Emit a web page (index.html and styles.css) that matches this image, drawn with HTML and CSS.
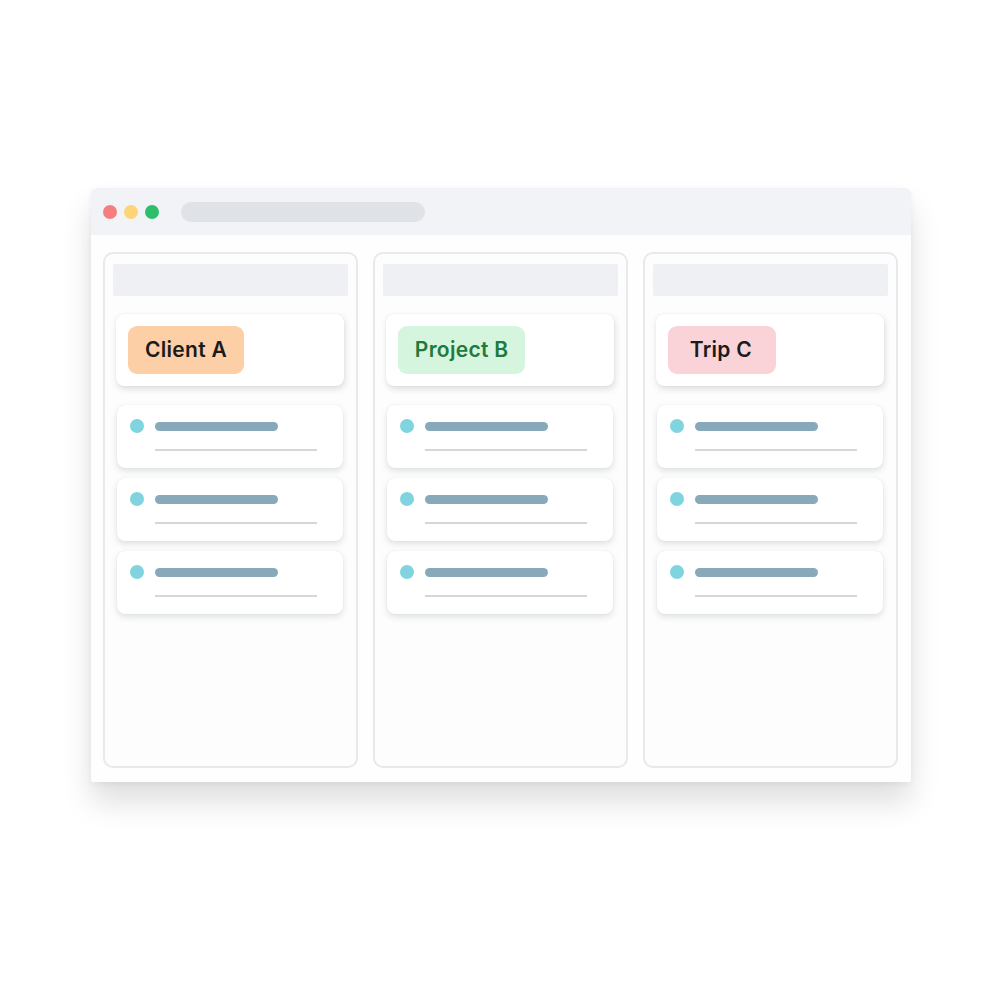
FILE: index.html
```html
<html>
<head>
    <title>Board</title>
    <link rel="stylesheet" href="styles.css">
</head>
<body>
    <div class="window">
        <div class="titlebar">
            <span class="dot red"></span>
            <span class="dot yellow"></span>
            <span class="dot green"></span>
            <div class="address"></div>
        </div>
        <div class="board">
            <div class="column">
                <div class="col-head"></div>
                <div class="head-card"><span class="tag orange">Client A</span></div>
                <div class="item"><span class="bullet"></span><div class="lines"><div class="bar"></div><div class="rule"></div></div></div>
                <div class="item"><span class="bullet"></span><div class="lines"><div class="bar"></div><div class="rule"></div></div></div>
                <div class="item"><span class="bullet"></span><div class="lines"><div class="bar"></div><div class="rule"></div></div></div>
            </div>
            <div class="column">
                <div class="col-head"></div>
                <div class="head-card"><span class="tag mint">Project B</span></div>
                <div class="item"><span class="bullet"></span><div class="lines"><div class="bar"></div><div class="rule"></div></div></div>
                <div class="item"><span class="bullet"></span><div class="lines"><div class="bar"></div><div class="rule"></div></div></div>
                <div class="item"><span class="bullet"></span><div class="lines"><div class="bar"></div><div class="rule"></div></div></div>
            </div>
            <div class="column">
                <div class="col-head"></div>
                <div class="head-card"><span class="tag pink">Trip C</span></div>
                <div class="item"><span class="bullet"></span><div class="lines"><div class="bar"></div><div class="rule"></div></div></div>
                <div class="item"><span class="bullet"></span><div class="lines"><div class="bar"></div><div class="rule"></div></div></div>
                <div class="item"><span class="bullet"></span><div class="lines"><div class="bar"></div><div class="rule"></div></div></div>
            </div>
        </div>
    </div>
</body>
</html>
```

FILE: styles.css
```css
body {
    margin: 0;
    background: #ffffff;
    font-family: "Inter", "Open Sans", sans-serif;
}
.window {
    margin: 188px 0 0 91px;
    width: 820px;
    height: 594px;
    background: #fefefe;
    border-radius: 6px 6px 2px 2px;
    box-shadow: 0 20px 30px rgba(0, 0, 0, 0.13), 0 2px 6px rgba(0, 0, 0, 0.05);
    overflow: hidden;
}
.titlebar {
    height: 47px;
    background: #f2f3f6;
    display: flex;
    align-items: center;
    padding-left: 12px;
    box-sizing: border-box;
}
.dot {
    width: 14px;
    height: 14px;
    border-radius: 50%;
    margin-right: 7px;
}
.red { background: #f47f7f; }
.yellow { background: #fdd576; }
.green { background: #2ebd6b; }
.address {
    margin-left: 15px;
    width: 244px;
    height: 20px;
    border-radius: 10px;
    background: #dfe2e7;
}
.board {
    display: grid;
    grid-template-columns: 1fr 1fr 1fr;
    column-gap: 14.5px;
    padding: 17px 13px 14px 12px;
}
.column {
    height: 516px;
    box-sizing: border-box;
    border: 2px solid #e8e9eb;
    border-radius: 10px;
    background: #fdfdfd;
    padding: 10px 8px 0 8px;
}
.col-head {
    height: 32px;
    background: #eef0f3;
    border-radius: 2px;
    margin-bottom: 18px;
}
.head-card {
    margin: 0 4px 19px 3px;
    height: 72px;
    box-sizing: border-box;
    padding: 12px;
    background: #ffffff;
    border-radius: 8px;
    box-shadow: 1px 3px 6px rgba(60, 80, 90, 0.18), 0 0 1px rgba(0, 0, 0, 0.12);
}
.tag {
    display: inline-block;
    height: 48px;
    line-height: 48px;
    padding: 0 17px 0 17px;
    border-radius: 9px;
    font-size: 21px;
    font-weight: 600;
    letter-spacing: 0.3px;
    color: #1b1b1b;
}
.orange { background: #fdcfa6; }
.mint { background: #d5f5df; color: #1f7a3d; }
.pink { background: #fad3d8; padding: 0 24px 0 22px; }
.item {
    margin: 0 5px 10px 4px;
    height: 63px;
    box-sizing: border-box;
    padding: 14px 13px 0 13px;
    background: #ffffff;
    border-radius: 8px;
    box-shadow: 0 3px 6px rgba(60, 80, 90, 0.16), 0 0 1px rgba(0, 0, 0, 0.12);
    display: flex;
    align-items: flex-start;
}
.bullet {
    width: 14px;
    height: 14px;
    border-radius: 50%;
    background: #80d4df;
    flex: none;
}
.lines {
    margin-left: 11px;
    padding-top: 3px;
}
.bar {
    width: 123px;
    height: 9px;
    border-radius: 5px;
    background: #87a9ba;
}
.rule {
    margin-top: 18px;
    width: 162px;
    height: 2px;
    background: #d4d6d8;
}
```
